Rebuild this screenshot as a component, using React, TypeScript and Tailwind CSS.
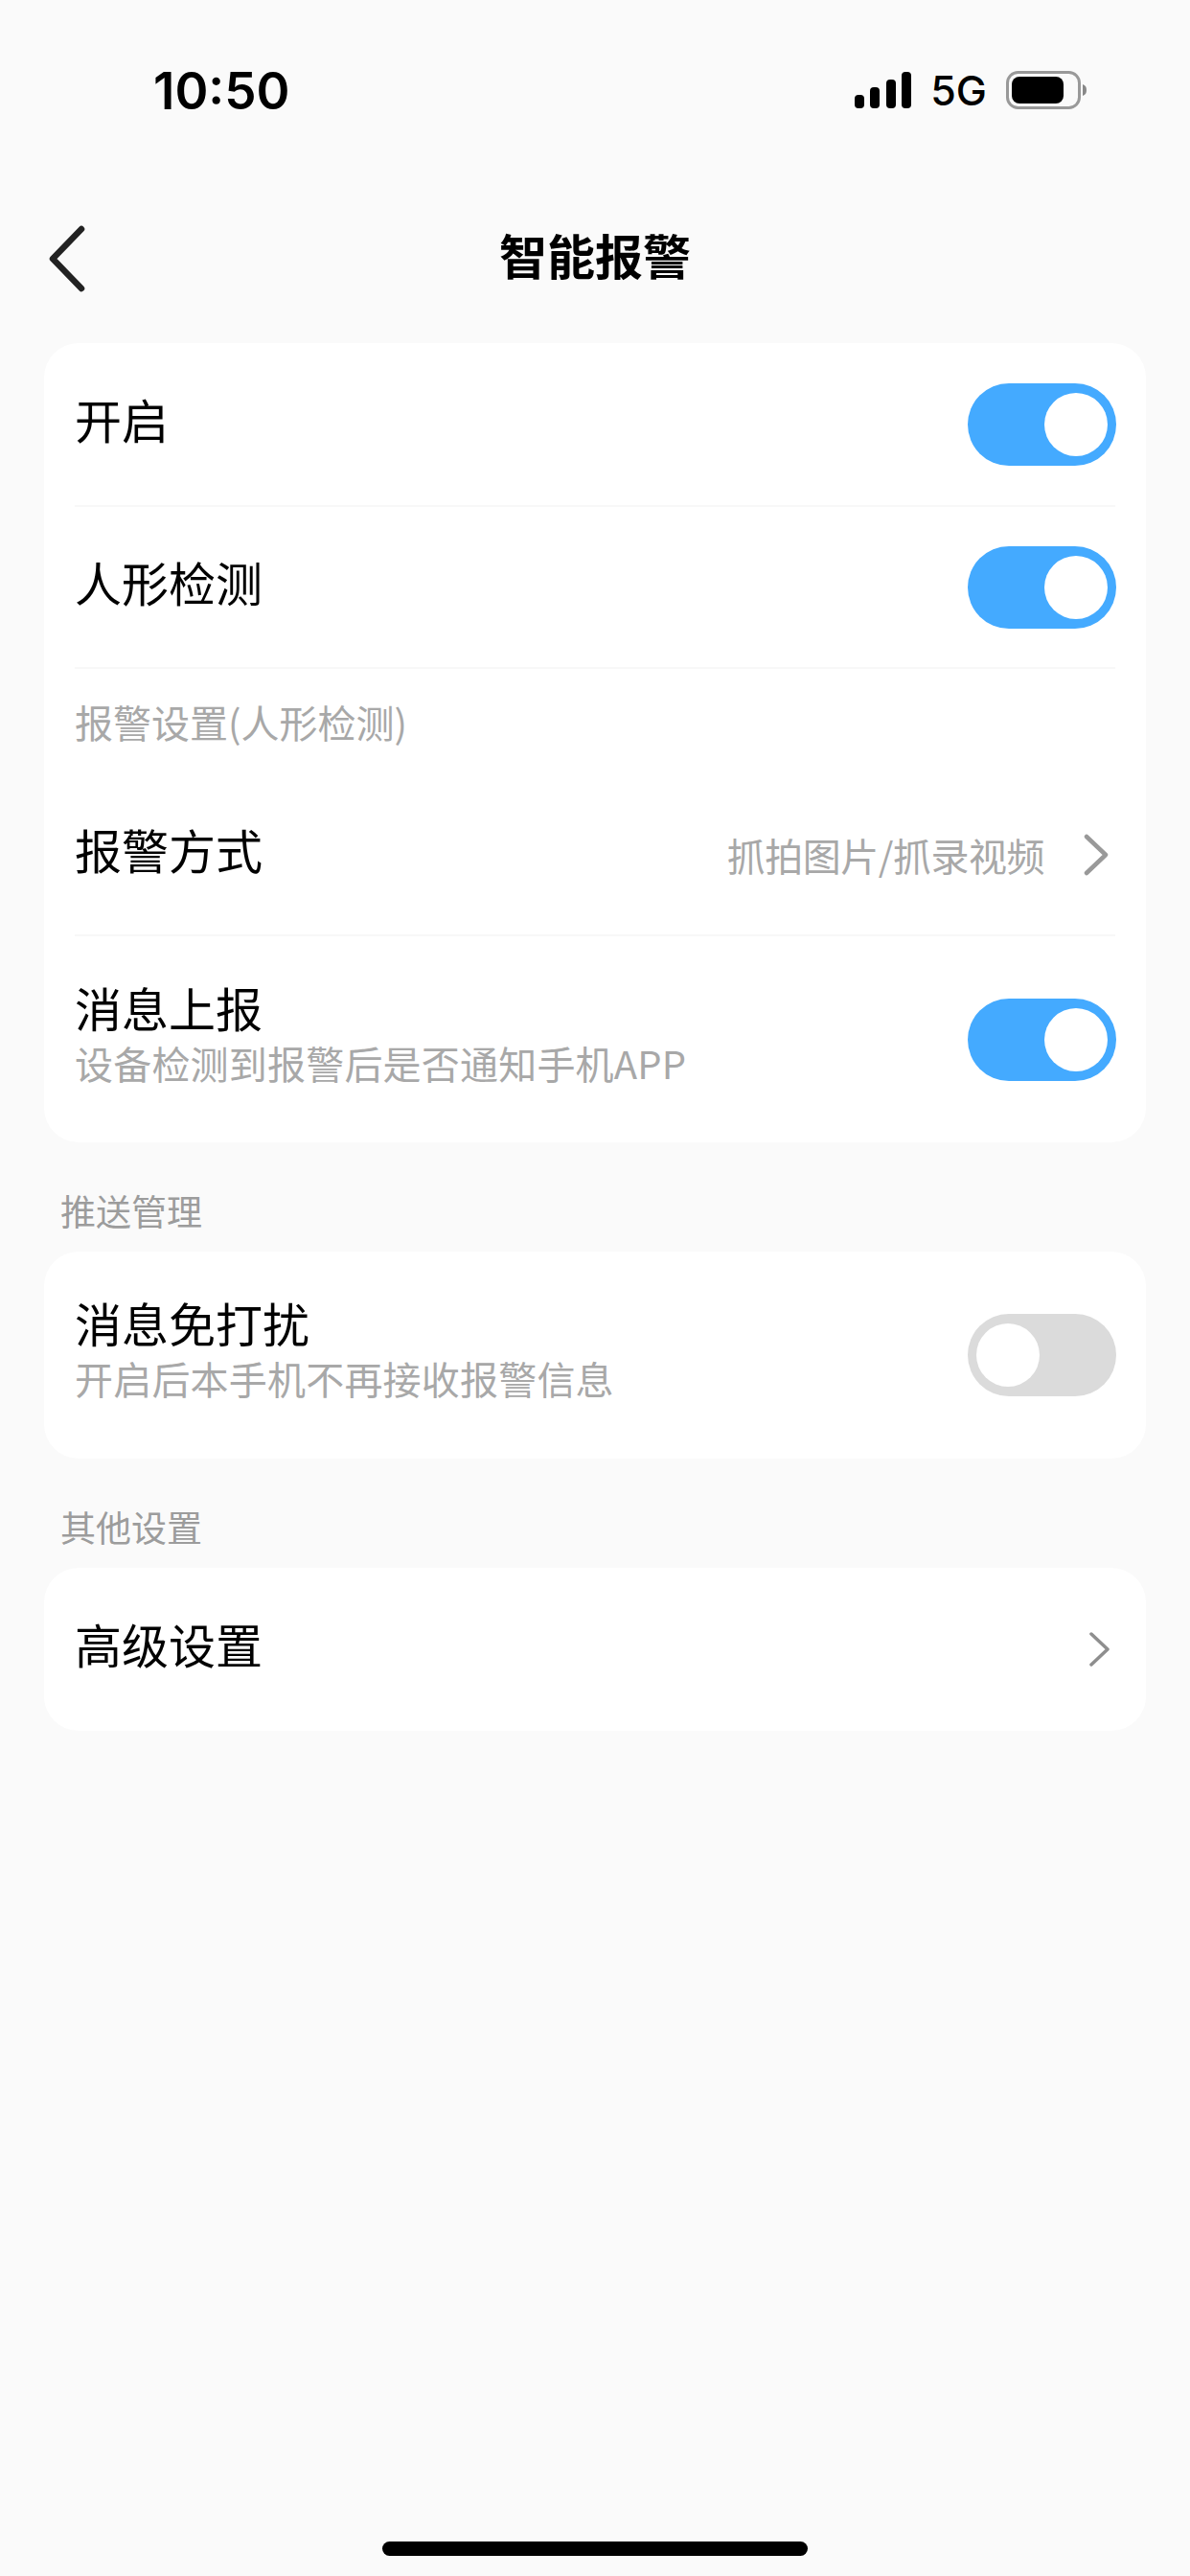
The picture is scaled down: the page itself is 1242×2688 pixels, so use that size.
import type { ReactNode } from "react";

const CJK = "font-['Noto_Sans_CJK_SC','Inter',sans-serif]";

function Toggle({ on }: { on: boolean }) {
  return (
    <div
      className={`-mr-[1px] flex h-[86px] w-[155px] shrink-0 items-center rounded-full px-[9px] ${
        on ? "justify-end bg-[#44aaff]" : "justify-start bg-[#dbdbdb]"
      }`}
    >
      <div className="size-[66px] rounded-full bg-white" />
    </div>
  );
}

function Chevron({ small }: { small?: boolean }) {
  return small ? (
    <svg width="24" height="36" viewBox="0 0 24 36" fill="none" className="shrink-0">
      <path d="M3 2l17 16L3 34" stroke="#8e8e8e" strokeWidth="3.5" strokeLinecap="round" strokeLinejoin="round" />
    </svg>
  ) : (
    <svg width="28" height="44" viewBox="0 0 28 44" fill="none" className="shrink-0">
      <path d="M4 3l20 19L4 41" stroke="#999999" strokeWidth="4.5" strokeLinecap="round" strokeLinejoin="round" />
    </svg>
  );
}

function Row({
  title,
  sub,
  right,
  className = "",
}: {
  title: string;
  sub?: string;
  right: ReactNode;
  className?: string;
}) {
  return (
    <div className={`mx-[32px] flex items-center justify-between ${className}`}>
      <div className="flex flex-col pb-[12px]">
        <span className="text-[49px] leading-[60px] text-black">{title}</span>
        {sub ? <span className="text-[40px] leading-[56px] tracking-[0.2px] text-[#a8a8a8]">{sub}</span> : null}
      </div>
      {right}
    </div>
  );
}

function Divider() {
  return <div className="mx-[32px] h-[2px] bg-[#f8f8f8]" />;
}

function SectionTitle({ children }: { children: string }) {
  return <div className="ml-[63px] mt-[48px] mb-[20px] text-[37px] leading-[46px] text-[#9c9c9c]">{children}</div>;
}

function SignalBars() {
  return (
    <svg width="60" height="38" viewBox="0 0 60 38" className="shrink-0">
      <rect x="0" y="24" width="10" height="14" rx="4" fill="#000" />
      <rect x="16" y="16" width="10" height="22" rx="4" fill="#000" />
      <rect x="33" y="8" width="10" height="30" rx="4" fill="#000" />
      <rect x="49" y="0" width="10" height="38" rx="4" fill="#000" />
    </svg>
  );
}

function Battery() {
  return (
    <svg width="84" height="40" viewBox="0 0 84 40" className="shrink-0">
      <rect x="1.5" y="1.5" width="75" height="37" rx="11" fill="none" stroke="#999999" strokeWidth="3" />
      <rect x="6" y="6" width="54" height="28" rx="8" fill="#000" />
      <path d="M80 14c3 1 4 3 4 6s-1 5-4 6z" fill="#888888" />
    </svg>
  );
}

export default function App() {
  return (
    <div className={`flex min-h-[2688px] w-[1242px] flex-col bg-[#fafafa] ${CJK}`}>
      {/* status bar */}
      <div className="flex h-[228px] items-start justify-between pl-[160px] pr-[108px] pt-[65px]">
        <span className="font-['Inter',sans-serif] text-[53px] font-semibold leading-[60px] text-black">10:50</span>
        <div className="flex items-center pt-[7px]">
          <SignalBars />
          <span className="ml-[19px] font-['Inter',sans-serif] text-[43px] font-medium leading-[44px] text-black">5G</span>
          <div className="ml-[20px]">
            <Battery />
          </div>
        </div>
      </div>

      {/* nav bar */}
      <div className="relative flex h-[78px] items-center justify-center pb-[5px]">
        <svg width="42" height="70" viewBox="0 0 42 70" fill="none" className="absolute left-[49px] top-[7px]">
          <path d="M36 4L6 35l30 31" stroke="#222222" strokeWidth="6.5" strokeLinecap="round" strokeLinejoin="round" />
        </svg>
        <span className="text-[50px] font-bold leading-[60px] text-black">智能报警</span>
      </div>

      <div className="mx-[46px] mt-[52px] flex flex-col rounded-[36px] bg-white">
        <Row title="开启" right={<Toggle on />} className="h-[169px]" />
        <Divider />
        <Row title="人形检测" right={<Toggle on />} className="h-[167px]" />
        <Divider />
        <div className="mx-[32px] mt-[30px] text-[40px] leading-[50px] text-[#a8a8a8]">报警设置(人形检测)</div>
        <Row
          title="报警方式"
          className="h-[197px] pt-[30px]"
          right={
            <div className="flex items-center">
              <span className="text-[40px] tracking-[-0.5px] text-[#a8a8a8]">抓拍图片/抓录视频</span>
              <div className="ml-[40px] mr-[6px]">
                <Chevron />
              </div>
            </div>
          }
        />
        <Divider />
        <Row
          title="消息上报"
          sub="设备检测到报警后是否通知手机APP"
          right={<Toggle on />}
          className="h-[215px]"
        />
      </div>

      <SectionTitle>推送管理</SectionTitle>
      <div className="mx-[46px] rounded-[36px] bg-white">
        <Row
          title="消息免打扰"
          sub="开启后本手机不再接收报警信息"
          right={<Toggle on={false} />}
          className="h-[216px]"
        />
      </div>

      <SectionTitle>其他设置</SectionTitle>
      <div className="mx-[46px] rounded-[36px] bg-white">
        <Row
          title="高级设置"
          className="h-[170px]"
          right={
            <div className="mr-[4px]">
              <Chevron small />
            </div>
          }
        />
      </div>

      {/* home indicator */}
      <div className="mt-auto flex justify-center pb-[21px]">
        <div className="h-[15px] w-[444px] rounded-full bg-black" />
      </div>
    </div>
  );
}
